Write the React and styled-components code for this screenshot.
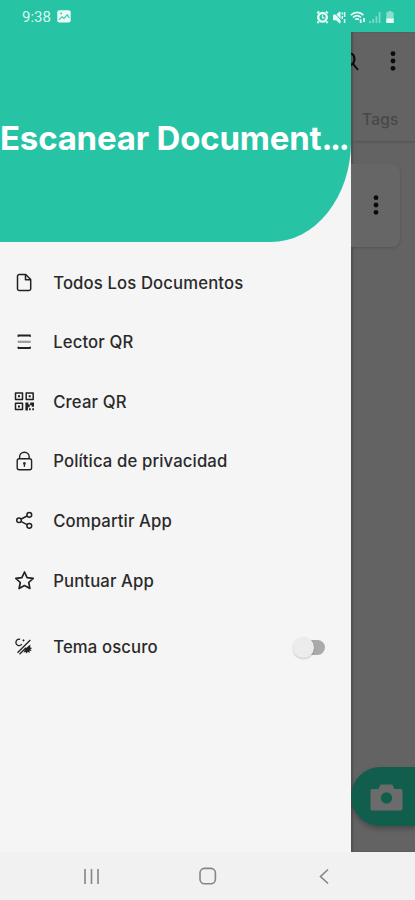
import styled, { createGlobalStyle } from "styled-components";

const menuItems = [
  { label: "Todos Los Documentos", icon: "file" },
  { label: "Lector QR", icon: "lines" },
  { label: "Crear QR", icon: "qr" },
  { label: "Política de privacidad", icon: "lock" },
  { label: "Compartir App", icon: "share" },
  { label: "Puntuar App", icon: "star" },
];

const shapes = {
  file: (
    <>
      <path d="M5.3 2.5h6.4l5 5v9.2a1.8 1.8 0 0 1-1.8 1.8H5.3a1.8 1.8 0 0 1-1.8-1.8V4.3a1.8 1.8 0 0 1 1.8-1.8z" />
      <path d="M11.5 2.7v5h5" />
    </>
  ),
  lines: (
    <>
      <path d="M3.7 4.5h13M3.7 17h13" strokeWidth="1.8" />
      <path d="M3.7 10.8h13" strokeWidth="2.2" stroke="#999" />
      <path d="M4.2 4.5V6M16.2 4.5V6M4.2 15.5V17M16.2 15.5V17" strokeWidth="1" />
    </>
  ),
  qr: (
    <>
      <path d="M1.5 2h7v6.4h-7zM12.2 2h7v6.4h-7zM1.5 12.2h7v6.4h-7z" strokeWidth="1.5" />
      <path
        d="M4 4.2h2v2H4zM14.7 4.2h2v2h-2zM4 14.4h2v2H4zM11.4 11.4h3v2h1.8v-2H20v4.4h-2.3v-1.5h-2v2h-1.8v3.1h-2.5zM15 17.2h1.7v2H15zM18.3 17.2H20v2h-1.7z"
        fill="#222"
        stroke="none"
      />
    </>
  ),
  lock: (
    <>
      <rect x="3.2" y="7.8" width="14.4" height="11" rx="2" strokeWidth="1.4" />
      <path d="M5.6 7.6V6a4.8 4.8 0 0 1 9.6 0v1.6" strokeWidth="1.4" />
      <path d="M10.4 12.8v3" strokeWidth="1.3" />
      <circle cx="10.4" cy="12.4" r="1.4" fill="#333" stroke="none" />
    </>
  ),
  share: (
    <>
      <circle cx="5" cy="10.3" r="2.3" />
      <circle cx="15.3" cy="4.8" r="2.4" />
      <circle cx="15.3" cy="15.8" r="2.4" />
      <path d="m7.3 9 5.7-3M7.3 11.6l5.7 3" />
    </>
  ),
  star: (
    <path
      d="m10.5 2 2.6 5.6 6.1.7-4.5 4.2 1.2 6-5.4-3-5.4 3 1.2-6-4.500-4.200 6.100-.7z"
      strokeWidth="1.7"
    />
  ),
  theme: (
    <>
      <path d="M6.2 3.4A3.2 3.2 0 1 0 7.8 8.2" strokeWidth="1.2" />
      <path d="M3.5 16.8 16.3 4M5.5 18.3 12 11.8" strokeWidth="1.3" />
      <path d="M8.5 4.4h2M9.5 3.4v2" strokeWidth="1" />
      <path
        d="m16.3 8.6-4.8 4-2 3.8 2.200-.4 1.200 1.800.7-2 2.200 1.300-.4-2.400 2.300.3-1.400-1.800 2-1.200-2.100-.5z"
        fill="#222"
        stroke="none"
      />
    </>
  ),
};

const MenuIcon = ({ name }) => (
  <IconSvg width="21" height="21" viewBox="0 0 21 21">
    {shapes[name]}
  </IconSvg>
);

const Dots = () => (
  <svg width="6" height="20" viewBox="0 0 6 20" fill="#0b0b0b">
    <circle cx="3" cy="2.7" r="2.4" />
    <circle cx="3" cy="10" r="2.4" />
    <circle cx="3" cy="17.3" r="2.4" />
  </svg>
);

const StatusIcons = () => (
  <svg width="82" height="16" viewBox="0 0 82 16" fill="none" stroke="#e6fbf5">
    {/* alarm */}
    <path d="m2.2 4.2 2-1.8M12.8 4.2l-2-1.8M3.5 12.5l-1 1.6M11.5 12.5l1 1.6" strokeWidth="2" />
    <circle cx="7.5" cy="8.3" r="4.3" strokeWidth="2.4" />
    <path d="M7.5 6v2.8h2" strokeWidth="1.2" />
    {/* muted sound */}
    <path d="M18.5 6h2.7L25 2.8v11.4l-3.8-3.4h-2.7z" fill="#e6fbf5" />
    <path d="m18.5 2.5 10.5 12" stroke="#26c3a5" strokeWidth="1" />
    <path d="M27.3 3.5v2M27.3 7v3M29.6 3v5M29.6 10v4" strokeWidth="1.5" />
    {/* wifi */}
    <path
      d="M35.8 6.2c4-3.8 9-3.8 12.6 0M38 8.5c2.6-2.4 5.5-2.4 8 0M40.2 10.6c1.2-1 2.5-1 3.7 0"
      strokeWidth="1.7"
    />
    <path d="M45.7 14v-3.7M49 9v4" strokeWidth="1.8" />
    {/* signal */}
    <g stroke="#7fdac7" strokeWidth="1.7">
      <path d="M55 14v-2M58.2 14v-4M61.4 14V7.2M64.6 14V3" />
    </g>
    {/* battery */}
    <path d="M73.5 2h3v1.3h2.2V14h-7.4V3.3h2.2z" fill="#88dfcc" stroke="none" />
    <path d="M71.3 9.5h7.4V14h-7.4z" fill="#e6fbf5" stroke="none" />
  </svg>
);

export default function App() {
  return (
    <Screen>
      <GlobalStyle />
      <StatusBar>
        <Clock>
          9:38
          <svg width="14" height="13" viewBox="0 0 14 13">
            <rect x=".3" y=".3" width="13.4" height="12.2" rx="2" fill="#e9fbf6" />
            <path d="m2 9.8 3-3 2 1.7 3.2-3.7L12.3 8" fill="none" stroke="#45c9b0" strokeWidth="1.2" />
            <circle cx="4" cy="3.5" r="1" fill="#45c9b0" />
          </svg>
        </Clock>
        <StatusIcons />
      </StatusBar>

      <Body>
        <Drawer>
          <DrawerHeader>
            <Title>
              Escanear Document<Ellipsis>...</Ellipsis>
            </Title>
          </DrawerHeader>
          <Menu>
            {menuItems.map((item) => (
              <MenuRow key={item.label}>
                <MenuIcon name={item.icon} />
                <Label>{item.label}</Label>
              </MenuRow>
            ))}
            <ThemeRow>
              <MenuIcon name="theme" />
              <Label>Tema oscuro</Label>
              <Switch>
                <Thumb />
              </Switch>
            </ThemeRow>
          </Menu>
        </Drawer>

        <Page>
          <TopBar>
            <Toolbar>
              <svg width="8" height="22" viewBox="0 0 8 22" fill="none" stroke="#0b0b0b" strokeWidth="2">
                <path d="M-1 3.2c6 1 6 10.6 0 12M2.2 14l4.8 6" />
              </svg>
              <Dots />
            </Toolbar>
            <Tab>Tags</Tab>
          </TopBar>
          <DocumentCard>
            <Dots />
          </DocumentCard>
          <CameraButton>
            <svg width="33" height="27" viewBox="0 0 33 27">
              <path
                d="M2 5h6.5l2.2-4.5h11.6L24.5 5H31a1.5 1.5 0 0 1 1.5 1.5V25a1.5 1.5 0 0 1-1.5 1.5H2A1.5 1.5 0 0 1 .5 25V6.5A1.5 1.5 0 0 1 2 5z"
                fill="#6b6b6b"
              />
              <circle cx="16.5" cy="14" r="5.7" fill="#115e4d" />
            </svg>
          </CameraButton>
        </Page>
      </Body>

      <NavBar>
        <svg width="16" height="17" viewBox="0 0 16 17" stroke="#858585" strokeWidth="1.6">
          <path d="M2 1v15M8.5 1v15M15 1v15" />
        </svg>
        <svg width="18" height="18" viewBox="0 0 18 18" fill="none" stroke="#858585" strokeWidth="1.6">
          <rect x="1" y="1.400" width="15.400" height="15.400" rx="4.500" />
        </svg>
        <svg width="16" height="17" viewBox="0 0 16 17" fill="none" stroke="#858585" strokeWidth="1.6">
          <path d="m12 1.500-7.500 7 7.500 7" />
        </svg>
      </NavBar>
    </Screen>
  );
}

const GlobalStyle = createGlobalStyle`
  * {
    box-sizing: border-box;
  }
  body {
    margin: 0;
    font-family: Inter, Roboto, sans-serif;
  }
  svg {
    display: block;
    flex-shrink: 0;
  }
`;

const Screen = styled.div`
  display: flex;
  flex-direction: column;
  width: 415px;
  height: 900px;
  overflow: hidden;
  background: #f5f5f5;
`;

const StatusBar = styled.header`
  display: flex;
  align-items: center;
  justify-content: space-between;
  height: 32px;
  padding: 1px 18.5px 0 22px;
  background: #26c3a5;
`;

const Clock = styled.div`
  display: flex;
  align-items: center;
  gap: 6px;
  color: #d8f7ef;
  font: 400 15px Roboto, sans-serif;
`;

const Body = styled.div`
  display: flex;
  height: 820px;
`;

const Drawer = styled.aside`
  width: 351px;
  flex-shrink: 0;
  background: #f5f5f5;
`;

const DrawerHeader = styled.div`
  height: 210px;
  padding-top: 84px;
  background: #26c3a5;
  border-bottom-right-radius: 80px 100px;
`;

const Title = styled.h1`
  margin: 0;
  color: #fff;
  font-size: 33px;
  font-weight: 700;
  line-height: 44px;
  letter-spacing: -0.2px;
  white-space: nowrap;
`;

const Ellipsis = styled.span`
  letter-spacing: -2.4px;
`;

const Menu = styled.nav`
  padding-top: 10.5px;
`;

const MenuRow = styled.div`
  display: flex;
  align-items: center;
  gap: 18.2px;
  height: 59.6px;
  padding-left: 14px;
`;

const ThemeRow = styled(MenuRow)`
  margin-top: 7px;
  padding-right: 26px;
`;

const IconSvg = styled.svg`
  fill: none;
  stroke: #222;
  stroke-width: 1.5;
  stroke-linejoin: round;
`;

const Label = styled.span`
  padding-top: 0.6px;
  color: #2a2a2a;
  font-size: 16.7px;
  font-weight: 500;
  letter-spacing: 0.13px;
  white-space: nowrap;
`;

const Switch = styled.div`
  display: flex;
  align-items: center;
  width: 27px;
  height: 15px;
  margin: 1px 0 0 auto;
  border-radius: 8px;
  background: #aaa;
`;

const Thumb = styled.div`
  width: 21px;
  height: 21px;
  margin-left: -5px;
  flex-shrink: 0;
  border-radius: 50%;
  background: #ececec;
  box-shadow: 0 1px 2px rgba(0, 0, 0, 0.2);
`;

const Page = styled.main`
  flex: 1;
  min-width: 0;
  display: flex;
  flex-direction: column;
  overflow: hidden;
  background: #636363;
  box-shadow: inset 2px 0 2px rgba(0, 0, 0, 0.2);
`;

const TopBar = styled.div`
  height: 110px;
  border-bottom: 1px solid #565656;
  box-shadow: 0 1px 2px rgba(0, 0, 0, 0.08);
`;

const Toolbar = styled.div`
  display: flex;
  align-items: center;
  justify-content: space-between;
  height: 58px;
  padding-right: 19px;
`;

const Tab = styled.div`
  padding: 19px 0 0 11px;
  color: #484848;
  font-size: 15.5px;
  font-weight: 500;
  line-height: 22px;
  letter-spacing: 0.2px;
`;

const DocumentCard = styled.div`
  display: flex;
  align-items: center;
  justify-content: flex-end;
  width: 49px;
  height: 83px;
  margin-top: 22px;
  padding: 0 21px 1px 0;
  border-radius: 0 8px 8px 0;
  background: #666;
  box-shadow: 0 1px 3px rgba(0, 0, 0, 0.16);
`;

const CameraButton = styled.div`
  display: flex;
  align-items: center;
  height: 59px;
  margin: auto 0 26px;
  padding: 1px 0 0 19px;
  border-radius: 30px 0 0 30px;
  background: #115e4d;
  box-shadow: 0 3px 5px rgba(0, 0, 0, 0.25);
`;

const NavBar = styled.footer`
  display: flex;
  align-items: center;
  justify-content: space-between;
  height: 48px;
  padding: 0 83px;
  background: #f1f1f1;
`;
